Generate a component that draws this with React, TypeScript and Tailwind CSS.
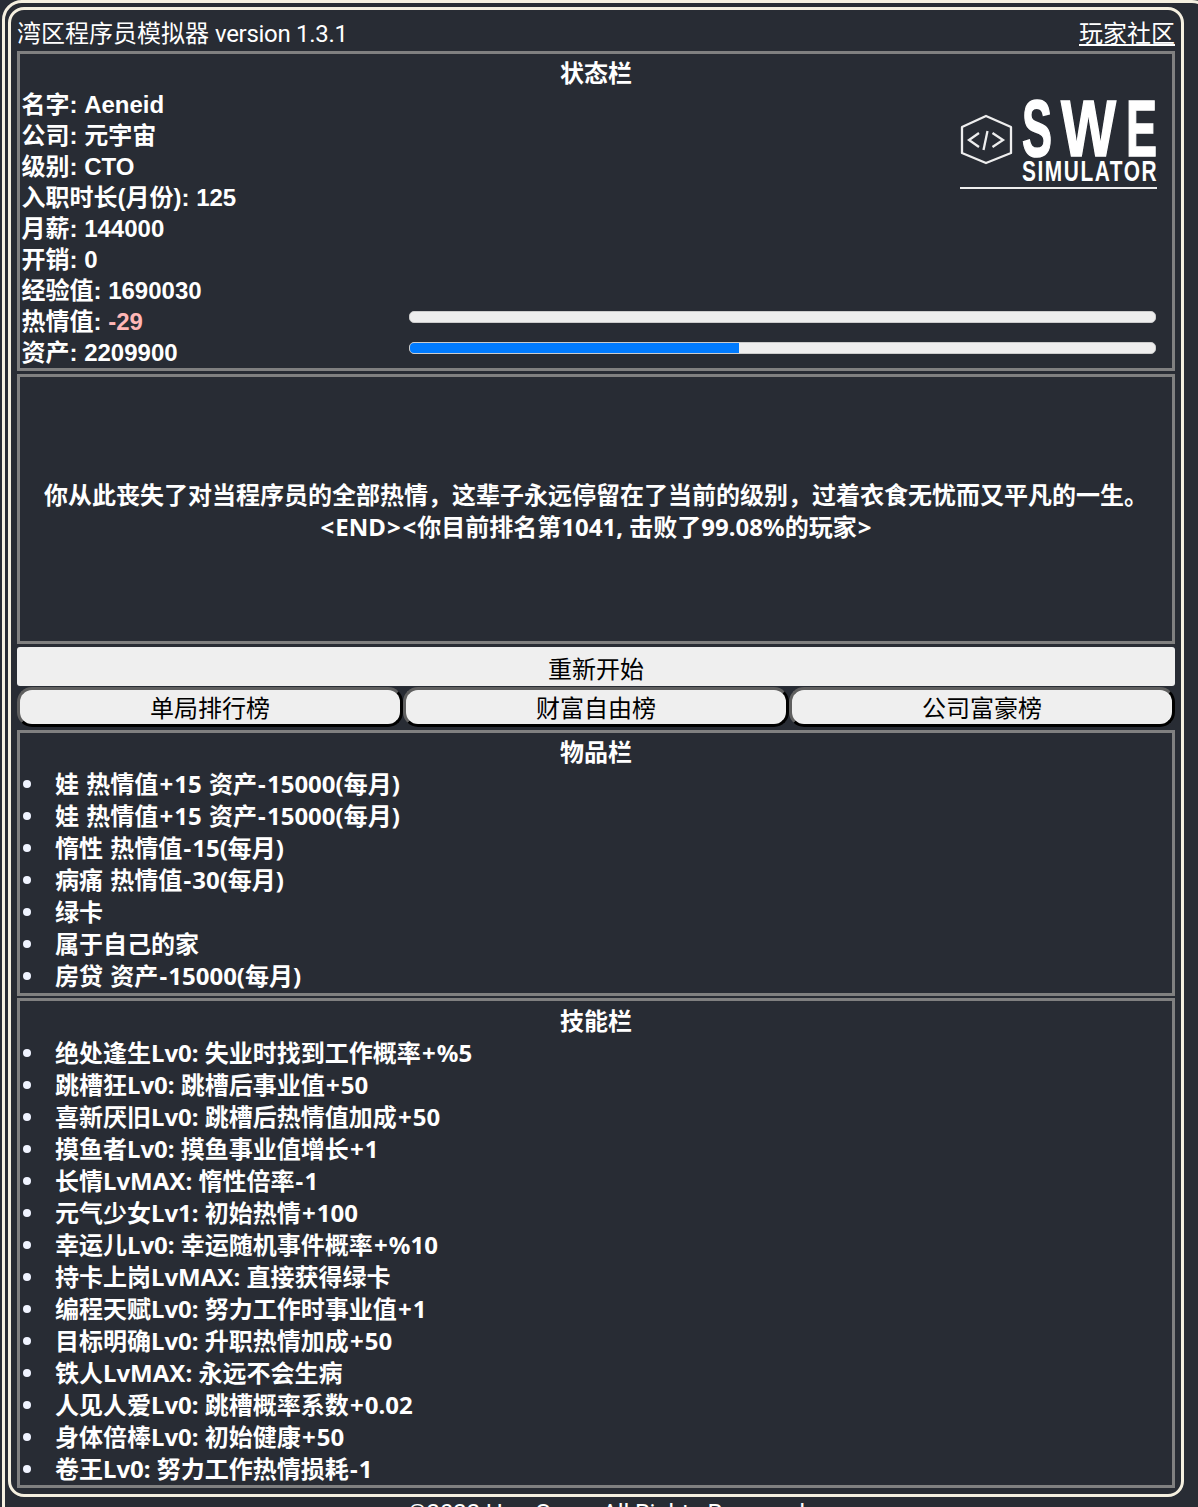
const statusRows: [string, string][] = [
  ["名字", "Aeneid"],
  ["公司", "元宇宙"],
  ["级别", "CTO"],
  ["入职时长(月份)", "125"],
  ["月薪", "144000"],
  ["开销", "0"],
  ["经验值", "1690030"],
  ["热情值", "-29"],
  ["资产", "2209900"],
]

const items = [
  "娃 热情值+15 资产-15000(每月)",
  "娃 热情值+15 资产-15000(每月)",
  "惰性 热情值-15(每月)",
  "病痛 热情值-30(每月)",
  "绿卡",
  "属于自己的家",
  "房贷 资产-15000(每月)",
]

const skills = [
  "绝处逢生Lv0: 失业时找到工作概率+%5",
  "跳槽狂Lv0: 跳槽后事业值+50",
  "喜新厌旧Lv0: 跳槽后热情值加成+50",
  "摸鱼者Lv0: 摸鱼事业值增长+1",
  "长情LvMAX: 惰性倍率-1",
  "元气少女Lv1: 初始热情+100",
  "幸运儿Lv0: 幸运随机事件概率+%10",
  "持卡上岗LvMAX: 直接获得绿卡",
  "编程天赋Lv0: 努力工作时事业值+1",
  "目标明确Lv0: 升职热情加成+50",
  "铁人LvMAX: 永远不会生病",
  "人见人爱Lv0: 跳槽概率系数+0.02",
  "身体倍棒Lv0: 初始健康+50",
  "卷王Lv0: 努力工作热情损耗-1",
]

const narrow = "'Liberation Sans Narrow', 'Liberation Sans', sans-serif"

function Logo() {
  return (
    <svg width="200" height="96" viewBox="0 0 200 96" className="block">
      <g fill="none" stroke="#eeeeee" strokeWidth="2.3">
        <path d="M27 21 L52 32 L52 58 L27 68 L3 58 L3 32 Z" strokeLinejoin="round" />
        <path d="M20 38 L10 45 L20 52" />
        <path d="M24.5 55 L28.5 36" />
        <path d="M33.5 38 L44 45 L33.5 52" />
      </g>
      <g fill="#ffffff" stroke="#ffffff" strokeWidth="1.6" fontFamily={narrow} fontWeight="700">
        <text x="63" y="60.5" fontSize="80" textLength="30" lengthAdjust="spacingAndGlyphs">S</text>
        <text x="102" y="60.5" fontSize="80" textLength="55" lengthAdjust="spacingAndGlyphs">W</text>
        <text x="167" y="60.5" fontSize="80" textLength="31" lengthAdjust="spacingAndGlyphs">E</text>
      </g>
      <text
        transform="translate(63 86) scale(0.72 1)"
        fill="#ffffff"
        fontFamily={narrow}
        fontWeight="700"
        fontSize="29"
        textLength="187"
        lengthAdjust="spacing"
      >
        SIMULATOR
      </text>
      <rect x="1" y="92" width="197" height="2" fill="#eeeeee" />
    </svg>
  )
}

// the + and - sit wider in the reference's font
function Signed({ text }: { text: string }) {
  return (
    <>
      {text.split(/([+-])/).map((part, index) =>
        part === "+" || part === "-" ? (
          <span key={index} className="px-[1.15px]">{part}</span>
        ) : (
          part
        ),
      )}
    </>
  )
}

function ListPanel({ title, rows, className }: { title: string; rows: string[]; className: string }) {
  return (
    <section className={`border-[3px] border-[#808080] font-bold ${className}`}>
      <h2 className="text-center">{title}</h2>
      <ul>
        {rows.map((row, index) => (
          <li key={index} className="flex items-center">
            <span className="mr-[24px] ml-[3px] size-[8px] rounded-full bg-[#f0f4ff]" />
            <span>
              <Signed text={row} />
            </span>
          </li>
        ))}
      </ul>
    </section>
  )
}

export default function App() {
  return (
    <div className="h-[1507px] overflow-hidden bg-[#282c34] text-[24px] leading-[32px] text-white font-['Noto_Sans','Noto_Sans_CJK_SC',sans-serif]">
      <div className="ml-[2px] w-[1210px] rounded-[20px] border-[3px] border-[#f5f0e0] pt-[4px] pl-[3px]">
        <div className="w-[1176px] rounded-[16px] border-[3px] border-[#f5f0e0] px-[6px] pb-[6px]">
          <header className="flex h-[41px] items-end justify-between pb-[1px] font-['Roboto','Noto_Sans_CJK_SC',sans-serif]">
            <span>
              湾区程序员模拟器 <span className="tracking-[-0.3px]">version 1.3.1</span>
            </span>
            <a href="#" className="underline">玩家社区</a>
          </header>

          <section className="flex h-[320px] flex-col border-[3px] border-[#808080] pt-1 font-bold font-['Liberation_Sans','Noto_Sans_CJK_SC',sans-serif] leading-[31px]">
            <h2 className="text-center">状态栏</h2>
            <div className="flex flex-1 pl-[1.5px]">
              <div className="w-[387.5px]">
                {statusRows.map(([label, value]) => (
                  <div key={label}>
                    {label}: <span className={label === "热情值" ? "text-[#ffb6b6]" : ""}>{value}</span>
                  </div>
                ))}
              </div>
              <div className="flex w-[747px] flex-col items-end justify-between pb-[14px]">
                <div className="mt-[6px] mr-[-3px]">
                  <Logo />
                </div>
                <div className="flex w-full flex-col gap-[19px]">
                  <div className="h-[12px] rounded-[5px] border border-[#cccccc] bg-[#eeeeee]" />
                  <div className="h-[12px] overflow-hidden rounded-[5px] border border-[#cccccc] bg-[#eeeeee]">
                    <div className="h-full bg-[#007bff]" style={{ width: `${(330 / 747) * 100}%` }} />
                  </div>
                </div>
              </div>
            </div>
          </section>

          <section className="mt-[3px] flex h-[270px] flex-col items-center justify-center border-[3px] border-[#808080] pt-[4px] text-center font-bold">
            <p>你从此丧失了对当程序员的全部热情，这辈子永远停留在了当前的级别，过着衣食无忧而又平凡的一生。</p>
            <p>
              <span className="px-[1px]">&lt;</span>END<span className="px-[1px]">&gt;</span>
              <span className="px-[1px]">&lt;</span>你目前排名第1041, 击败了99.08%的玩家<span className="px-[1px]">&gt;</span>
            </p>
          </section>

          <button className="mt-[3px] block h-[39px] w-full rounded-[3px] bg-[#efefef] pt-[4px] text-black">重新开始</button>

          <div className="mt-[1px] grid grid-cols-3">
            {["单局排行榜", "财富自由榜", "公司富豪榜"].map((label) => (
              <button
                key={label}
                className="h-[40px] rounded-[15px] border-[3px] border-t-[#5f5f5f] border-l-[#5f5f5f] border-r-black border-b-black bg-[#efefef] pt-[2px] text-black"
              >
                {label}
              </button>
            ))}
          </div>

          <div className="mt-[3px] flex flex-col gap-[2px]">
            <ListPanel title="物品栏" rows={items} className="pt-[3px] pb-[1px] [word-spacing:1px]" />
            <ListPanel title="技能栏" rows={skills} className="pt-1" />
          </div>
        </div>
        <footer className="w-[1203px] text-center font-['Roboto',sans-serif] tracking-[-0.15px]">©2022 Hao Guan. All Rights Reserved.</footer>
      </div>
    </div>
  )
}
